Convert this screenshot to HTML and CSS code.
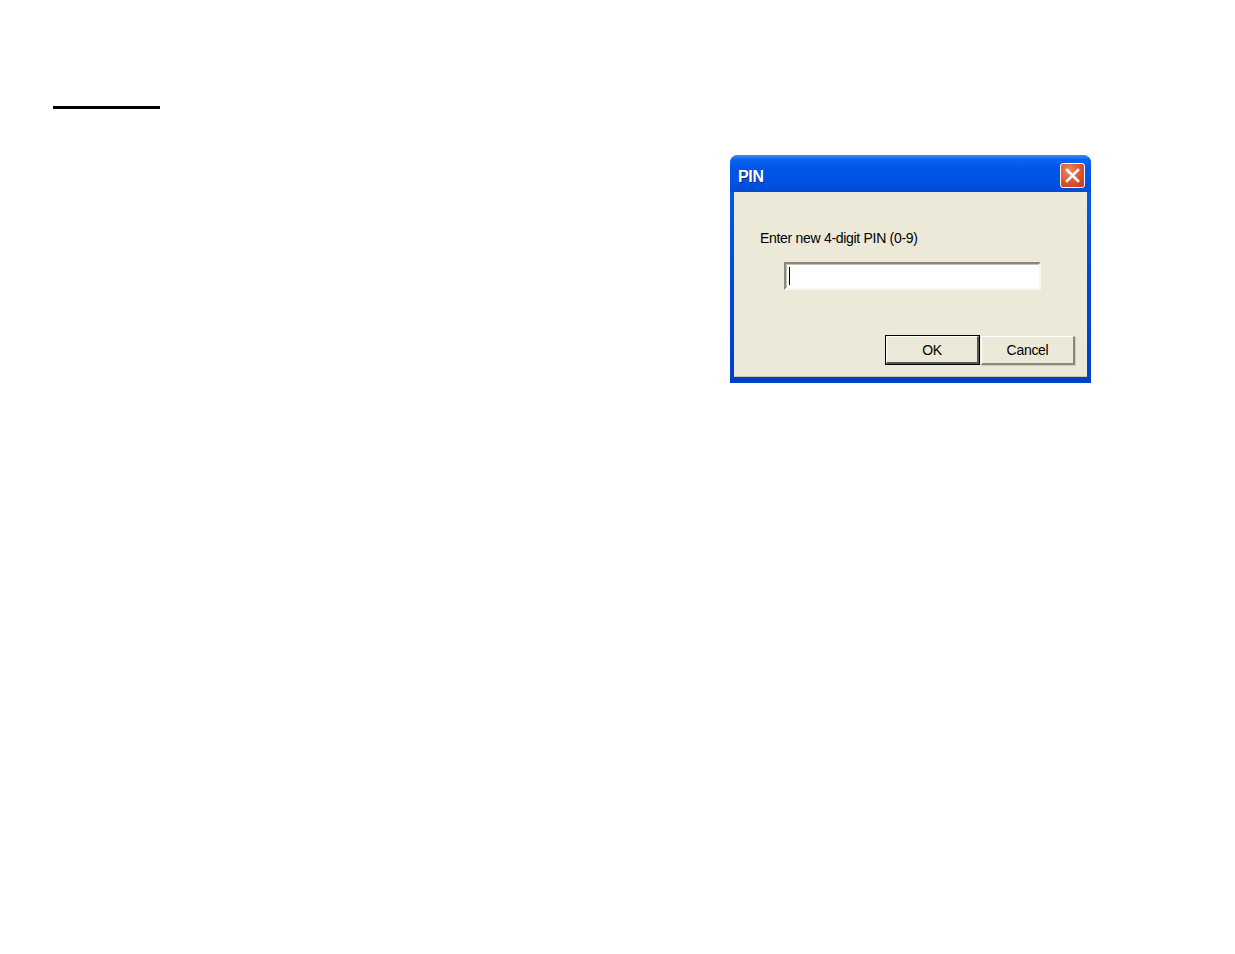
FILE: index.html
```
<!DOCTYPE html>
<html>
<head>
<meta charset="utf-8">
<title>PIN</title>
<link rel="stylesheet" href="styles.css">
</head>
<body>
<div class="page">
  <div class="rule"></div>
  <div class="dialog">
    <div class="titlebar">
      <span class="title">PIN</span>
      <div class="close">
        <svg width="17" height="17" viewBox="0 0 17 17"><path d="M3 3 L14 14 M14 3 L3 14" stroke="#fff" stroke-width="2.6" stroke-linecap="square"/></svg>
      </div>
    </div>
    <div class="content">
      <div class="label">Enter new 4-digit PIN (0-9)</div>
      <div class="input"><span class="caret"></span></div>
      <div class="buttons">
        <div class="btn default">OK</div>
        <div class="btn">Cancel</div>
      </div>
    </div>
  </div>
</div>
</body>
</html>
```
FILE: styles.css
```
html, body {
  margin: 0;
  padding: 0;
  background: #ffffff;
}
.page {
  padding: 106px 0 0 53px;
}
.rule {
  width: 107px;
  height: 3px;
  background: #000;
}
.dialog {
  margin: 46px 0 0 677px;
  width: 361px;
  background: linear-gradient(#0a5fe8, #0047d8 60%, #003fc8);
  border-radius: 8px 8px 0 0;
  display: flex;
  flex-direction: column;
  font-family: "Liberation Sans", Arial, sans-serif;
}
.titlebar {
  height: 37px;
  display: flex;
  align-items: center;
  justify-content: space-between;
  padding: 0 6px 0 8px;
  border-radius: 8px 8px 0 0;
  background: linear-gradient(#3d8cf8 0%, #0a64f0 12%, #0055e8 40%, #0052e0 80%, #0049d4 100%);
}
.title {
  color: #fff;
  font-weight: bold;
  font-size: 16px;
  letter-spacing: -0.3px;
  text-shadow: 1px 1px 0 #0a2a80;
  padding-top: 6px;
}
.close {
  width: 23px;
  height: 23px;
  margin-top: 3px;
  border: 1px solid #fff;
  border-radius: 3px;
  background: radial-gradient(circle at 35% 30%, #f08a6a, #df4f2c 55%, #c63a18);
  display: flex;
  align-items: center;
  justify-content: center;
}
.content {
  margin: 0 4px 6px 4px;
  background: #ece9d8;
  padding: 37px 12px 11px 26px;
  display: flex;
  flex-direction: column;
  border-bottom: 1px solid #c8c5b4;
}
.label {
  font-size: 14px;
  letter-spacing: -0.3px;
  line-height: 18px;
  color: #000;
}
.input {
  margin: 15px 0 0 24px;
  width: 253px;
  height: 24px;
  background: #fff;
  border-top: 2px solid #8a887e;
  border-left: 2px solid #8a887e;
  border-right: 2px solid #f8f6ee;
  border-bottom: 2px solid #f8f6ee;
  box-shadow: inset 1px 1px 0 #c4c1b4;
  display: flex;
  align-items: center;
}
.caret {
  width: 1px;
  height: 18px;
  background: #000;
  margin-left: 3px;
}
.buttons {
  margin-top: 45px;
  display: flex;
  justify-content: flex-end;
  align-items: center;
}
.btn {
  width: 91px;
  height: 26px;
  display: flex;
  align-items: center;
  justify-content: center;
  font-size: 14px;
  letter-spacing: -0.3px;
  color: #000;
  background: #ece9d8;
  border-top: 1px solid #fff;
  border-left: 1px solid #fff;
  border-right: 2px solid #8a887e;
  border-bottom: 2px solid #8a887e;
  box-shadow: 1px 1px 0 #d0cdbf;
}
.btn.default {
  width: 90px;
  height: 25px;
  outline: 1px solid #000;
  outline-offset: 0;
  margin: 1px 2px 1px 1px;
  border-right: 2px solid #555;
  border-bottom: 2px solid #555;
}
```
